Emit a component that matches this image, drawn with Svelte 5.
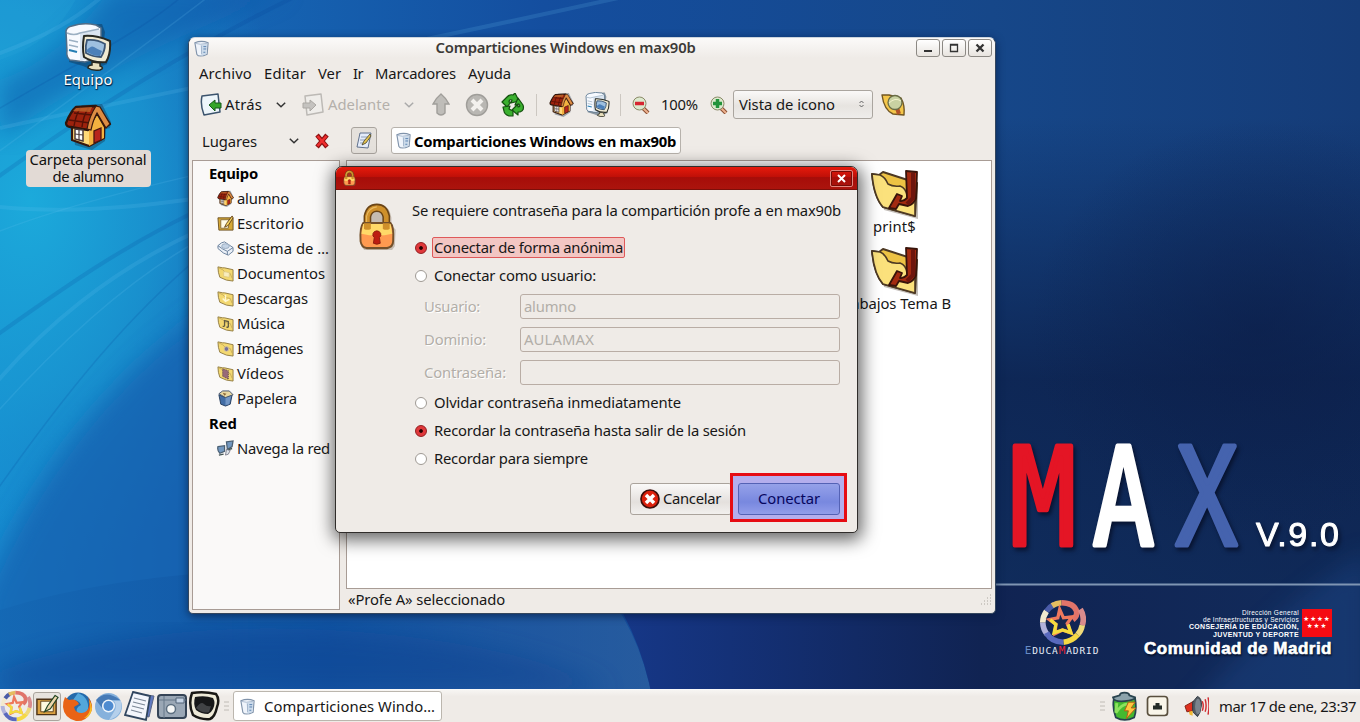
<script>
  // Adjusts tracking so that a label fills its measured width.
  function fit(node, width) {
    const n = node.textContent.length;
    const natural = node.getBoundingClientRect().width;
    node.style.letterSpacing = (width - natural) / n + 'px';
  }
  const menus = [['Archivo', 53], ['Editar', 42], ['Ver', 23], ['Ir', 10], ['Marcadores', 81], ['Ayuda', 43]];
  const places = [
    ['alumno', 52, 'home'], ['Escritorio', 67, 'desk'], ['Sistema de …', 92, 'disk'],
    ['Documentos', 88, 'folder'], ['Descargas', 71, 'down'], ['Música', 48, 'music'],
    ['Imágenes', 66, 'image'], ['Vídeos', 47, 'video'], ['Papelera', 60, 'trash']
  ];
  const fields = [['Usuario:', 56, 'alumno', 52], ['Dominio:', 62, 'AULAMAX', 70], ['Contraseña:', 82, '', 0]];
  const streaks = [
    'M-20 190C90 110 200 40 330 -20', 'M-20 165C70 100 140 50 230 -20', 'M-20 60C40 40 80 20 120 -20',
    'M-20 120C80 60 150 30 200 -20', 'M0 128C150 95 340 60 700 -20', 'M-10 235C100 190 300 150 520 110',
    'M-10 340C60 290 130 240 220 200', 'M-10 420C70 330 150 260 230 225', 'M-10 206C60 214 130 208 200 198',
    'M-10 500C60 400 130 310 220 240', 'M-10 390C40 330 110 270 200 230'
  ];
</script>

{#snippet house(size)}
  <svg width={size} height={size} viewBox="0 0 48 48">
    <path d="M5 24l5-16 6-6 20-1 9 18-1 6-4 1-1 12-13 9-17-5-2-16-4-1z" fill="#102840" opacity=".35" transform="translate(2 1)" />
    <path d="M8 21v17l17 6 15-8V21L31 7z" fill="#ffd978" stroke="#38180d" stroke-width="2.2" stroke-linejoin="round" />
    <path d="M25 23v21l15-8V21L32 10z" fill="#f3b240" />
    <path d="M32 4L12 5Q7 9 2 21q0 4 5 4l17 3q3-8 9-17l8 14 5-3z" fill="#9d220d" stroke="#30150b" stroke-width="2.3" stroke-linejoin="round" />
    <path d="M10 11l18 2M5 18l21 3M17 5q-5 7-7 19M25 5q-6 9-7 20" stroke="#541006" stroke-width="1.4" fill="none" />
    <path d="M12 6l16-1-2 5-17-1z" fill="#c1682c" opacity=".8" />
    <path d="M32 4l4 1 10 17-4 4-9-15q-4 7-6 17l-4-1q2-12 9-23z" fill="#dd8c43" stroke="#38180d" stroke-width="1.2" />
    <path d="M30 41V29l7-3v12z" fill="#b7251c" stroke="#4a1610" stroke-width="1.3" />
    <path d="M11 27l8 1v11l-8-2z" fill="#fff" stroke="#4b3a3a" stroke-width="1.5" /><path d="M15 27v11M11 32l8 1" stroke="#4b3a3a" stroke-width="1.2" />
  </svg>
{/snippet}

{#snippet computer(size)}
  <svg width={size} height={size} viewBox="0 0 48 48">
    <path d="M5 8l9-6 24-1 3 8-1 8 6 4-3 20-15 6-9-4-14-4z" fill="#10304d" opacity=".45" />
    <path d="M2 8q1-4 6-5 12-4 24-1l5 3v29l-16 5L6 37Q2 34 3 28z" fill="#f7faff" stroke="#506d88" stroke-width="1.5" />
    <path d="M16 10q10-3 20-3v26l-20 5z" fill="#dae5f1" />
    <path d="M3 10q7 3 13 0l19-4M5 17l9 2M5 22l9 2" fill="none" stroke="#9cb0c3" stroke-width="1.4" />
    <path d="M5 27l8 2" stroke="#247eb4" stroke-width="2" />
    <path d="M20 13q12-1 26 5 1 13-4 21-13 1-22-5-2-9 0-21z" fill="#f0ead2" stroke="#272923" stroke-width="2" stroke-linejoin="round" />
    <path d="M23 17q10-1 18 4 0 7-4 13-8 0-15-4-1-7 1-13z" fill="#9ec0e0" stroke="#3b5574" stroke-width="1.8" />
    <path d="M22 28q5-6 8-4 3 2 8 4l-2 5q-8 0-14-5z" fill="#4c80b9" />
    <path d="M28 39l8 1v3q5 2 0 4-8 1-12-2 0-3 4-3z" fill="#e8dfbd" stroke="#29291f" stroke-width="1.5" />
  </svg>
{/snippet}

{#snippet server(size)}
  <svg width={size} height={size} viewBox="0 0 18 18">
    <path d="M2 3q7-3 14 0l-1 12q-4 2-7 2-3 0-4-2z" fill="#eff4fb" stroke="#8093aa" stroke-width="1.2" />
    <path d="M8 5l7-1-1 11-5 2z" fill="#cbdaea" /><path d="M2 3.500q5 2 13 0M9 6v9" fill="none" stroke="#9aadc4" stroke-width=".8" /><path d="M11 7h3M11 9.500h3M11 13h2" stroke="#557fae" />
  </svg>
{/snippet}

{#snippet padlock(size)}
  <svg width={size * 0.82} height={size} viewBox="2 -1 45 49" preserveAspectRatio="none">
    <path d="M9 20v-6Q11 2 24 1t15 12v8l5 5-1 17-4 5H8l-4-5V25z" fill="#776550" opacity=".35" transform="translate(2 1)" />
    <path d="M13 24V13Q15 4 24 4t11 9v11" fill="none" stroke="#6b4517" stroke-width="9" />
    <path d="M13 24V13Q15 4 24 4t11 9v11" fill="none" stroke="#cf902b" stroke-width="5.500" />
    <path d="M12 22V13Q14 4 24 3" fill="none" stroke="#e9ba62" stroke-width="1.2" />
    <path d="M8 20h32q4 3 3 19 0 6-7 7H12q-6-1-7-7-1-15 3-19z" fill="#ff9a50" stroke="#74502a" stroke-width="2.2" />
    <path d="M8 21h32l2 10q-18 4-36 0z" fill="#ffd968" />
    <path d="M9 20h8v6q-4 2-8 0zM31 20h8v6q-4 2-8 0z" fill="#cf902b" />
    <path d="M24 28a5 4 0 00-3 7l-1 6q4 2 8 0l-1-6a5 4 0 00-3-7z" fill="#bd1c11" stroke="#8a1b0c" />
  </svg>
{/snippet}

{#snippet share()}
  <svg width="52" height="50" viewBox="0 0 52 50">
    <path d="M9 10l16-4 24 10v34l-34-9z" fill="#c4bfba" />
    <path d="M3 5l7 1 4-3 34 11-2 33-32-9Q5 28 3 5z" fill="#edc244" stroke="#4d3923" stroke-width="2" stroke-linejoin="round" />
    <path d="M3 5l8 1q5 2 8 9 5 3 12 2 6 2 7 10l8 4v16l-32-9Q5 28 3 5z" fill="#fbe17c" stroke="#4d3923" stroke-width="1.6" stroke-linejoin="round" />
    <path d="M37 2l11 1-1 26q-2 6-8 8l-9-2-3 5-7-1 8-14 5 2-2 5q3 1 7-3z" fill="#a32a10" stroke="#38130a" stroke-width="1.8" stroke-linejoin="round" />
    <path d="M44 4v25l-6 6" fill="none" stroke="#6d150d" stroke-width="4" />
  </svg>
{/snippet}

{#snippet placeIcon(kind)}
  {#if kind === 'home'}{@render house(17)}
  {:else if kind === 'desk'}
    <svg width="17" height="17" viewBox="0 0 18 18"><path d="M1 3h16v13H2z" fill="#d6a836" stroke="#705320" /><path d="M4 5h9l-1 9H4z" fill="#fffbe6" stroke="#8c7139" /><path d="M16 1l-6 8-2 4 4-2 5-8z" fill="#f1d15d" stroke="#66451e" /></svg>
  {:else if kind === 'disk'}
    <svg width="17" height="17" viewBox="0 0 18 18"><path d="M1 6q4-4 7-4l9 6v4l-5 4q-5-1-11-7z" fill="#eaf0f7" stroke="#687f9b" /><path d="M1 6q5 4 10 6l6-4M11 12v4" fill="none" stroke="#68809c" /><ellipse cx="9" cy="6.500" rx="4" ry="2.500" fill="#c3d3e5" stroke="#9aacc0" /></svg>
  {:else if kind === 'trash'}
    <svg width="17" height="17" viewBox="0 0 18 18"><path d="M2 5l7 3 7-3-2 10-5 2-5-2z" fill="#426da5" stroke="#263e5e" /><path d="M9 8l6-2-2 9-4 1z" fill="#7296c5" /><path d="M2 4l4-3 7 0 4 4-8 3z" fill="#e9d8a1" stroke="#42526a" /><path d="M6 3l4 1-2 2" fill="#8b6837" /></svg>
  {:else}
    <svg width="17" height="17" viewBox="0 0 18 18">
      <path d="M1 2l5 1h2l9 2v12l-7-1-7-3Q1 8 1 2z" fill="#f3d870" stroke="#927b40" stroke-linejoin="round" /><path d="M2 3l4 2 3 3 5 1 2 5" fill="none" stroke="#c1a458" stroke-width=".8" />
      {#if kind === 'music'}<path d="M8 12V6l4 1v6M6 12h2M10 13h2" fill="none" stroke="#625c41" stroke-width="1.400" />{/if}
      {#if kind === 'image'}<circle cx="10" cy="9.500" r="2.500" fill="#76709a" stroke="#d7c59c" />{/if}
      {#if kind === 'video'}<path d="M6 4l6 2v9l-6-3z" fill="#986a78" stroke="#59424a" stroke-dasharray="1 1" />{/if}
      {#if kind === 'down'}<path d="M9 5v7M6 9l3 3 4-2" fill="none" stroke="#fff7cf" stroke-width="1.500" />{/if}
      {#if kind === 'folder'}<path d="M7 7l6 1v5l-6-1z" fill="#f9edbd" stroke="#d9c580" stroke-width=".7" />{/if}
    </svg>
  {/if}
{/snippet}

{#snippet chevron(color)}
  <svg class="chev" width="10" height="6" viewBox="0 0 10 6"><path d="M.8.8L5 4.7 9.2.8" fill="none" stroke={color} stroke-width="1.5" /></svg>
{/snippet}

{#snippet swirl(size, inner)}
  <svg width={size} height={size} viewBox="0 0 50 50">
    <path d="M9 38A21 21 0 014 25" fill="none" stroke="#b1b2db" stroke-width="6" /><path d="M4 25a21 21 0 014-12" fill="none" stroke="#f2e9cf" stroke-width="6" />
    <path d="M8 13A21 21 0 0116 6" fill="none" stroke="#4b5ca8" stroke-width="6" /><path d="M14 7A21 21 0 0124 4" fill="none" stroke="#e5bd60" stroke-width="6" />
    <path d="M24 4q13 0 16 9 1 5-4 9" fill="none" stroke="#e0746a" stroke-width="6" />
    <path d="M44 11q5 8 2 17" fill="none" stroke="#d98b8c" stroke-width="6" /><path d="M46 28q-1 6-5 10" fill="none" stroke="#efd979" stroke-width="6" /><path d="M41 38Q35 45 26 46" fill="none" stroke="#f5d944" stroke-width="6" />
    <path d="M26 46Q13 46 8 36" fill="none" stroke="#5969bd" stroke-width="6" />
    <path d="M22 11l4 9 9-1-5 7 4 10-9-3-8 4 1-10-7-5 9-2z" fill={inner} stroke="#ed785d" stroke-width="3.500" /><path d="M12 22l6 5-2 9 9-3 9 3-3-9" fill="none" stroke="#f4dc3e" stroke-width="3.500" />
  </svg>
{/snippet}

{#snippet magnifier(plus)}
  <svg width="18" height="18" viewBox="0 0 18 18"><path d="M11 12l5 5" stroke="#8a4f32" stroke-width="4" /><path d="M11 12l5 5" stroke="#edb08e" stroke-width="2" /><circle cx="7.5" cy="7.5" r="6.5" fill="#dce9ce" stroke="#8b8a68" />
    <path d="M3 7.5h9" stroke={plus ? '#23933b' : '#d62631'} stroke-width="3.500" />{#if plus}<path d="M7.5 3v9" stroke="#23933b" stroke-width="3.500" />{/if}</svg>
{/snippet}

<div class="desktop">
  <svg class="wallpaper" width="1360" height="722" viewBox="0 0 1360 722">
    <defs>
      <linearGradient id="base" x1="0" y1="0" x2="1" y2="0"><stop offset="0" stop-color="#168bd0" /><stop offset=".14" stop-color="#1669b7" /><stop offset=".4" stop-color="#144e9f" /><stop offset=".73" stop-color="#164789" /><stop offset="1" stop-color="#153c78" /></linearGradient>
      <radialGradient id="cyan"><stop offset="0" stop-color="#1caadb" /><stop offset=".5" stop-color="#1a9cd4" stop-opacity=".7" /><stop offset="1" stop-color="#178ccf" stop-opacity="0" /></radialGradient>
      <linearGradient id="shade" x1="0" y1="0" x2="0" y2="1"><stop offset=".2" stop-color="#0b1e48" stop-opacity="0" /><stop offset=".65" stop-color="#0c1f49" stop-opacity=".8" /><stop offset="1" stop-color="#0d2048" stop-opacity=".7" /></linearGradient>
      <linearGradient id="low" x1="0" y1="0" x2="1" y2="0"><stop offset="0" stop-color="#1467b3" /><stop offset=".5" stop-color="#11509f" /><stop offset="1" stop-color="#2f62a0" /></linearGradient>
      <linearGradient id="corner" x1="0" y1="0" x2="1" y2="0"><stop offset="0" stop-color="#16388a" /><stop offset=".5" stop-color="#102352" /><stop offset="1" stop-color="#122c5c" /></linearGradient>
      <radialGradient id="navy"><stop offset="0" stop-color="#0b1d47" /><stop offset="1" stop-color="#0b1d47" stop-opacity="0" /></radialGradient>
      <filter id="soft"><feGaussianBlur stdDeviation="12" /></filter>
    </defs>
    <rect width="1360" height="722" fill="url(#base)" />
    <ellipse cx="30" cy="200" rx="260" ry="380" fill="url(#cyan)" />
    <path d="M-20 600Q70 390 240 290V760H-20z" fill="#145fae" opacity=".7" filter="url(#soft)" />
    <path d="M0 140Q90 70 290-10H110Q60 60 0 80z" fill="#0d57a8" opacity=".5" filter="url(#soft)" />
    <path d="M0 60Q60 40 80-10H0z" fill="#2da9da" opacity=".2" />
    <path d="M0 610Q220 540 604 590 646 640 656 722H0z" fill="url(#low)" opacity=".7" />
    <path d="M604 584Q646 640 656 722H1360V584z" fill="url(#corner)" />
    <path d="M0 670Q150 620 330 630T610 690H0z" fill="#0b3f8e" opacity=".45" filter="url(#soft)" />
    <rect x="980" width="380" height="584" fill="url(#shade)" />
    <ellipse cx="1260" cy="330" rx="230" ry="210" fill="url(#navy)" opacity=".6" />
    <path d="M1180 722Q1270 610 1370 550V722z" fill="#1b4a8c" opacity=".4" filter="url(#soft)" />
    {#each streaks as d, i}<path {d} fill="none" stroke={i % 3 ? '#6dc8f1' : '#073f94'} stroke-width={i % 2 ? 1.5 : 4} opacity=".16" />{/each}
    <path d="M996 584.500h364" stroke="#7f95b3" stroke-width="2" />
  </svg>

  <svg class="brand" width="350" height="140" viewBox="0 0 350 140" font-family="DejaVu Sans Mono, monospace" font-size="136" stroke-width="5" stroke-linejoin="round">
    <text x="10" y="116.500" textLength="66" lengthAdjust="spacingAndGlyphs" fill="#e41525" stroke="#e41525">M</text>
    <text x="92.500" y="116.500" textLength="62" lengthAdjust="spacingAndGlyphs" fill="#fff" stroke="#fff">A</text>
    <text x="175.500" y="116.500" textLength="62" lengthAdjust="spacingAndGlyphs" fill="#4563ae" stroke="#4563ae">X</text>
    <text x="256" y="118" textLength="83" font-family="Liberation Sans, sans-serif" font-size="34" fill="#fff" stroke="#fff" stroke-width="1">V.9.0</text>
  </svg>

  <div class="educa">{@render swirl(47, '#17264e')}<div class="educaname"><i>E</i>DUCA<b>M</b>ADRID</div></div>
  <div class="region">
    <div class="regiontop">
      <div class="dept"><span use:fit={57}>Dirección General</span><span use:fit={96}>de Infraestructuras y Servicios</span><strong use:fit={110}>CONSEJERÍA DE EDUCACIÓN,</strong><strong use:fit={86}>JUVENTUD Y DEPORTE</strong></div>
      <div class="flag"><span>★★★★</span><span>★★★</span></div>
    </div>
    <div class="madrid"><span use:fit={188}>Comunidad de Madrid</span></div>
  </div>

  <div class="shortcut pc">{@render computer(48)}<span class="cap light"><span use:fit={49}>Equipo</span></span></div>
  <div class="shortcut personal">{@render house(48)}<span class="cap sel"><span use:fit={117}>Carpeta personal</span><span use:fit={71}>de alumno</span></span></div>

  <div class="window">
    <div class="title">
      {@render server(17)}
      <div class="titletext"><span use:fit={260}>Comparticiones Windows en max90b</span></div>
      <div class="wbtns">
        <span class="wbtn"><svg width="10" height="10"><path d="M1 8h8" stroke="#333" stroke-width="2" /></svg></span>
        <span class="wbtn"><svg width="10" height="10"><path d="M1.5 1.5h7v7h-7zM1 2h8" fill="none" stroke="#333" stroke-width="1.3" /></svg></span>
        <span class="wbtn"><svg width="10" height="10"><path d="M1.5 1.5l7 7M8.500 1.5l-7 7" stroke="#333" stroke-width="2.3" /></svg></span>
      </div>
    </div>
    <div class="menu">{#each menus as [m, w]}<span class="mi"><span use:fit={w}>{m}</span></span>{/each}</div>
    <div class="tools">
      <svg width="23" height="23" viewBox="0 0 23 23"><path d="M2 3l16-2 2 18-16 3Q0 12 2 3z" fill="#edf5fa" stroke="#3b536d" stroke-width="1.5" stroke-linejoin="round" /><path d="M9 12l6-5v3h6v5h-6v3z" fill="#34a528" stroke="#155818" stroke-linejoin="round" /></svg>
      <span class="back"><span use:fit={37}>Atrás</span></span>{@render chevron('#333')}
      <svg class="fwd" width="23" height="23" viewBox="0 0 23 23"><path d="M3 3l16-2 2 18-16 3z" fill="#efedea" stroke="#bcb9b5" stroke-width="1.5" stroke-linejoin="round" /><path d="M14 12L8 7v3H1v5h7v3z" fill="#c4c2bf" stroke="#aaa7a3" stroke-linejoin="round" /></svg>
      <span class="ahead"><span use:fit={62}>Adelante</span></span>{@render chevron('#aaa')}
      <svg class="up" width="18" height="24" viewBox="0 0 18 24"><path d="M9 1q5 4 8 10h-4v9q-4 4-8 0v-9H1Q4 5 9 1z" fill="#bfbdb9" stroke="#a09e9a" stroke-width="1.4" /></svg>
      <svg class="stop" width="24" height="24" viewBox="0 0 24 24"><circle cx="12" cy="12" r="10.500" fill="#b9b7b3" stroke="#9f9d99" stroke-width="1.4" /><path d="M7 7l10 10M17 7L7 17" stroke="#f3f1ee" stroke-width="4" /></svg>
      <svg class="reload" width="24" height="24" viewBox="0 0 24 24" fill="#3bb02f" stroke="#14500f" stroke-width="1.2" stroke-linejoin="round">
        <path d="M1 9l5-5q3-3 6-2l2-2 4 8-8 2 1-3q-3-1-3 2h2l-4 5z" /><path d="M17 5l5 7q2 5-3 7h-2v3l-6-5 6-6v3q3 0 1-3l-4 1z" /><path d="M2 14l7-1-1 3 4 2v5H8q-5-2-5-5z" />
      </svg>
      <i class="sep s1"></i><span class="thome">{@render house(25)}</span><span class="tcomp">{@render computer(25)}</span><i class="sep s2"></i>
      <span class="zoomout">{@render magnifier(false)}</span><span class="pct"><span use:fit={37}>100%</span></span><span class="zoomin">{@render magnifier(true)}</span>
      <div class="combo"><span use:fit={96}>Vista de icono</span><svg width="5" height="8"><path d="M.5 3l2-2 2 2M.5 5l2 2 2-2" fill="none" stroke="#555" stroke-width=".9" /></svg></div>
      <svg class="find" width="25" height="23" viewBox="0 0 25 23"><path d="M1 2h7l12 3q4 7 3 17l-11-1Q3 17 1 2z" fill="#f4c64a" stroke="#725723" stroke-width="1.4" stroke-linejoin="round" /><path d="M16 15l2 6" stroke="#b35327" stroke-width="4" /><circle cx="14" cy="9.500" r="7" fill="#c9d2a2" stroke="#696d47" stroke-width="1.3" /><path d="M8 10q6-6 12-2" stroke="#f3f2cd" fill="none" /></svg>
    </div>
    <div class="location">
      <span class="lug"><span use:fit={55}>Lugares</span></span>{@render chevron('#333')}
      <svg class="redx" width="16" height="16"><path d="M3 2l10 12M13 2L3 14" stroke="#8d1112" stroke-width="4.500" /><path d="M3.500 3l9 10M12.500 3l-9 10" stroke="#f02e2e" stroke-width="2.500" /></svg>
      <span class="edit"><svg width="16" height="18" viewBox="0 0 16 18"><path d="M4 1h11l-3 15-11-1z" fill="#e4ecfa" stroke="#60718d" /><path d="M5 5h7M4 8h6M4 11h5" stroke="#91a0b9" /><path d="M14 2L8 9l-2 4 4-2 5-7z" fill="#e5c34f" stroke="#43402b" stroke-width=".8" /></svg></span>
      <span class="crumb">{@render server(17)}<b use:fit={262}>Comparticiones Windows en max90b</b></span>
    </div>
    <div class="content">
      <div class="side">
        <div class="head"><span use:fit={49}>Equipo</span></div>
        {#each places as [p, w, icon]}<div class="place">{@render placeIcon(icon)}<span use:fit={w}>{p}</span></div>{/each}
        <div class="head"><span use:fit={28}>Red</span></div>
        <div class="place"><svg width="17" height="17" viewBox="0 0 18 18"><path d="M1 7l7-1v6l-5 2q-3-3-2-7zM10 2l7-1-1 6-5 3z" fill="#7398c0" stroke="#4b6073" stroke-width="1.300" /><path d="M10 10l4 1-2 4-3 1z" fill="#dfe5eb" stroke="#667" stroke-width=".8" /><path d="M2 16l5-1M12 10l4-1" stroke="#455" stroke-width="1.500" /></svg><span use:fit={93}>Navega la red</span></div>
      </div>
      <div class="mainpane">
        <div class="canvas">
          <div class="item">{@render share()}<span class="iname"><span use:fit={43}>print$</span></span></div>
          <div class="item">{@render share()}<span class="iname"><span use:fit={113}>Trabajos Tema B</span></span></div>
        </div>
        <div class="status"><span use:fit={157}>«Profe A» seleccionado</span><svg width="12" height="12"><path d="M1 11h11M4 8h8M7 5h5M10 2h2" stroke="#aaa69f" stroke-dasharray="1 2" /></svg></div>
      </div>
    </div>
  </div>

  <div class="dialog">
    <div class="dtitle">{@render padlock(16)}<span class="dclose"><svg width="9" height="9"><path d="M1 1l7 7M8 1L1 8" stroke="#fff" stroke-width="2" /></svg></span></div>
    <div class="dbody">
      <div class="lock">{@render padlock(47)}</div>
      <div class="form">
        <div class="question"><span use:fit={429}>Se requiere contraseña para la compartición profe a en max90b</span></div>
        <div class="radio"><i class="on"></i><span class="focus"><span use:fit={189}>Conectar de forma anónima</span></span></div>
        <div class="radio"><i></i><span class="rl"><span use:fit={162}>Conectar como usuario:</span></span></div>
        <div class="fields">{#each fields as [l, w, v, vw]}<div class="field"><div class="lab"><span use:fit={w}>{l}</span></div><div class="input">{#if v}<span use:fit={vw}>{v}</span>{/if}</div></div>{/each}</div>
        <div class="radio"><i></i><span class="rl"><span use:fit={247}>Olvidar contraseña inmediatamente</span></span></div>
        <div class="radio"><i class="on"></i><span class="rl"><span use:fit={312}>Recordar la contraseña hasta salir de la sesión</span></span></div>
        <div class="radio"><i></i><span class="rl"><span use:fit={154}>Recordar para siempre</span></span></div>
        <div class="actions">
          <span class="btn cancel"><svg width="20" height="20"><circle cx="10" cy="10" r="9" fill="#dc210d" stroke="#3c0e0a" stroke-width="1.7" /><path d="M6 6l8 8M14 6l-8 8" stroke="#fff" stroke-width="3.500" /></svg><span use:fit={58}>Cancelar</span></span>
          <span class="btn connect"><span use:fit={62}>Conectar</span></span>
        </div>
      </div>
    </div>
    <div class="mark"></div>
  </div>

  <div class="taskbar">
    <span class="launch">{@render swirl(32, '#f0ece7')}</span>
    <span class="launch pressed"><svg width="24" height="24" viewBox="0 0 25 24"><path d="M2 5h20v16H2z" fill="#dba242" stroke="#4c3217" stroke-width="1.5" /><path d="M6 7h13v11H6z" fill="#fff9df" stroke="#62431f" /><path d="M21 1l-8 11-3 6 6-3 8-12z" fill="#ecd6ac" stroke="#242" stroke-width="1.2" /></svg></span>
    <svg class="launch" width="31" height="31" viewBox="0 0 31 31"><circle cx="16" cy="15" r="13.500" fill="#246aab" /><path d="M16 2q11 4 10 16-2 6-10 6-4-7 3-10-2-5-8-5z" fill="#53a7dc" /><path d="M3 6l4 3q7-2 10 4l-5 3q1 6 8 6 6-1 7-7 1-5-1-9 7 9 2 17-5 8-14 7Q2 27 1 16q0-6 2-10z" fill="#e96316" /><path d="M27 9q4 12-5 18 6 0 8-9 0-5-3-9z" fill="#f8bf27" /></svg>
    <svg class="launch" width="31" height="31" viewBox="0 0 31 31"><circle cx="15.500" cy="15.500" r="13.500" fill="#86b1dc" /><path d="M3 9q10-11 24 0H16q-6 0-7 8z" fill="#477bb7" /><path d="M28 10q3 14-12 19l6-10q2-5-1-9z" fill="#b5d0eb" /><circle cx="15.500" cy="15" r="6.500" fill="#edf4fb" /><circle cx="15.500" cy="15" r="5" fill="#4e8bd0" /></svg>
    <svg class="launch" width="32" height="32" viewBox="0 0 32 32"><path d="M14 4l16 2-5 21-13-3z" fill="#617ac2" stroke="#5a6685" /><path d="M9 2l17 4-4 24-21-5z" fill="#f3f6fc" stroke="#31465f" stroke-width="1.8" /><path d="M10 8l12 3M9 12l12 3M8 16l12 3M7 20l11 3" stroke="#7b8796" stroke-width="1.2" /></svg>
    <svg class="launch" width="32" height="30" viewBox="0 0 32 30"><rect x="2" y="4" width="28" height="23" rx="3" fill="#9aa7b5" stroke="#354456" stroke-width="2" /><path d="M3 9h27M8 5v22" stroke="#66788a" /><path d="M20 7h8v5h-8z" fill="#c4d2e3" stroke="#526478" /><circle cx="15" cy="18" r="4.500" fill="#f5f6f5" stroke="#5d6f80" stroke-width="1.500" /></svg>
    <svg class="launch" width="32" height="32" viewBox="0 0 32 32"><path d="M4 3q12-2 24 1 4 5 1 13-2 10-7 12-9 1-17-4Q0 14 4 3z" fill="#eeead8" stroke="#191815" stroke-width="2.500" /><path d="M7 7q10-2 18 1 3 5 0 11-2 4-5 5-7 0-12-4Q5 14 7 7z" fill="#171819" /><path d="M8 18q5-7 8-4t7 2l-2 6q-6 2-13-4z" fill="#414345" /></svg>
    <svg class="grip" width="5" height="12"><path d="M0 2h5M0 6h5M0 10h5" stroke="#c0bcb6" /></svg>
    <div class="task">{@render server(17)}<span use:fit={171}>Comparticiones Windo…</span></div>
    <div class="tray">
      <svg width="5" height="12"><path d="M0 2h5M0 6h5M0 10h5" stroke="#c0bcb6" /></svg>
      <svg class="battery" width="26" height="31" viewBox="0 0 27 31"><path d="M2 7q11 5 22 0 2 12-1 20-10 5-19 0Q0 17 2 7z" fill="#44b92f" stroke="#25424f" stroke-width="1.800" /><path d="M1 6l7-2q0-3 5-3t5 3l6 2q0 3-11 4T1 6z" fill="#8ca3ab" stroke="#29434e" stroke-width="1.800" /><path d="M5 12l-1 10q6-9 12-9" fill="none" stroke="#8ce25d" stroke-width="3" /><path d="M17 11h7l-4 6h5L15 28l2-8h-4z" fill="#ffc53d" stroke="#b15b16" /></svg>
      <svg class="net" width="24" height="23" viewBox="0 0 24 23"><rect x="1.500" y="1.500" width="20" height="19" rx="3" fill="#f9f5e9" stroke="#594f3e" stroke-width="1.700" /><path d="M7 14.500v-4h2.500V8h4v2.500H16v4z" fill="#252c28" /></svg>
      <svg class="sound" width="25" height="23" viewBox="0 0 26 23"><path d="M1 11l9-5v10l-7 1z" fill="#df301e" stroke="#832315" /><path d="M9 7l5-6q5 2 4 10t-4 11l-5-5z" fill="#535b63" stroke="#2e3740" /><ellipse cx="14.500" cy="11.500" rx="3" ry="8" fill="#7b848d" /><path d="M19 6q2 5 0 10M22 4q2 7 0 13M25 2q2 9 0 18" fill="none" stroke="#d02e32" stroke-width="1.500" /><path d="M5 17l4-1v5l-3-1z" fill="#f3ba32" /></svg>
      <span use:fit={137}>mar 17 de ene, 23:37</span>
    </div>
  </div>
</div>

<style>
  :global(body) { overflow: hidden; }
  .desktop { position: relative; width: 1360px; height: 722px; overflow: hidden; font: 14.800px/18px "Noto Sans", sans-serif; color: #171717; white-space: nowrap; }
  .desktop :global(*) { box-sizing: border-box; }
  svg { display: block; flex: none; }
  .wallpaper { position: absolute; inset: 0; }
  .brand { position: absolute; left: 1000px; top: 428px; overflow: visible; filter: drop-shadow(2px 3px 2px #07122e); }
  .educa { position: absolute; left: 1023px; top: 599px; width: 78px; display: flex; flex-direction: column; align-items: center; }
  .educaname { font: 9.500px/11px "DejaVu Sans Mono", monospace; color: #e8edf6; letter-spacing: .9px; margin-top: -1px; }
  .educaname i { font-style: normal; font-size: 11px; color: #678bc4; } .educaname b { color: #e42431; font-size: 11px; font-weight: normal; }
  .region { position: absolute; left: 1120px; top: 608px; width: 212px; color: #fff; }
  .regiontop { display: flex; justify-content: flex-end; gap: 3px; height: 32px; }
  .dept { display: flex; flex-direction: column; align-items: flex-end; font: 6.500px/7px "Liberation Sans", sans-serif; padding-top: 1px; }
  .dept strong { font-size: 7px; line-height: 7.500px; }
  .flag { width: 30px; height: 28px; margin-top: 1px; background: #f50b12; font: 6.500px/7px "DejaVu Sans", sans-serif; display: flex; flex-direction: column; align-items: center; justify-content: center; letter-spacing: 1px; }
  .madrid { font: bold 17px/20px "Liberation Sans", sans-serif; text-align: right; -webkit-text-stroke: .6px #fff; text-shadow: 1px 2px 2px #050e25; margin-top: -1px; }
  .shortcut { position: absolute; display: flex; flex-direction: column; align-items: center; width: 126px; }
  .pc { left: 25px; top: 23px; } .personal { left: 25px; top: 102px; }
  .cap { display: flex; flex-direction: column; align-items: center; }
  .light { color: #fff; text-shadow: 1px 1px 1px #00284f, 0 1px 1px #00284f; margin-top: -1px; }
  .sel { background: #e2dad5; border-radius: 4px; width: 125px; height: 37px; line-height: 17px; padding-top: 1px; color: #111; }
  .window { position: absolute; left: 188px; top: 37px; width: 808px; height: 577px; background: #efebe7; border: 1px solid #34465d; border-top-color: #cbd4dd; border-radius: 7px 7px 5px 5px; box-shadow: 0 2px 9px #061a3eb0; display: flex; flex-direction: column; }
  .title { height: 20px; display: flex; align-items: center; padding: 1px 3px 0 4px; background: linear-gradient(#fbfaf9, #efebe7); border-radius: 6px 6px 0 0; }
  .titletext { flex: 1; display: flex; justify-content: center; color: #3c3a37; font-weight: 600; padding-left: 5px; margin-top: -4px; }
  .wbtns { display: flex; gap: 2px; margin-top: -1px; }
  .wbtn { width: 24px; height: 18px; border: 1px solid #8c8984; border-radius: 3px; background: linear-gradient(#fff, #e8e4df); display: flex; align-items: center; justify-content: center; }
  .menu { height: 30px; display: flex; gap: 12px; align-items: center; padding: 0 0 0 10px; }
  .mi { display: flex; }
  .tools { height: 32px; display: flex; align-items: center; padding: 1px 0 0 11px; }
  .back { width: 42px; padding-left: 2px; margin-right: 11px; } .back, .ahead, .pct { position: relative; top: -1px; } .fwd { margin-left: 16px; }
  .ahead { color: #b4b0ab; width: 65px; margin: 0 11px 0 3px; }
  .up { margin-left: 18px; } .stop { margin-left: 15px; } .reload { margin-left: 12px; }
  .sep { width: 1px; height: 22px; background: #ccc7c1; } .s1 { margin-left: 11px; } .s2 { margin-left: 10px; }
  .thome { margin-left: 12px; } .tcomp { margin-left: 11px; } .zoomout { margin-left: 11px; }
  .pct { width: 37px; margin: 0 12px 0 11px; } .zoomin { margin-right: 5px; }
  .combo { width: 140px; height: 29px; border: 1px solid #aaa59f; border-radius: 3px; background: linear-gradient(#faf9f8, #e7e4e0 55%, #efedeb); display: flex; align-items: center; justify-content: space-between; padding: 0 8px 1px 5px; }
  .find { margin-left: 8px; }
  .location { height: 40px; display: flex; align-items: center; padding: 1px 0 0 13px; }
  .lug { width: 87px; } .redx { margin-left: 15px; }
  .edit { width: 26px; height: 27px; margin-left: 21px; border: 1px solid #a9a49e; border-radius: 3px; background: #e5e1dc; display: flex; align-items: center; justify-content: center; }
  .crumb { width: 290px; height: 27px; margin-left: 14px; background: #fff; border: 1px solid #b7b2ac; border-radius: 3px; display: flex; align-items: center; padding-left: 3px; gap: 2px; color: #000; }
  .content { display: flex; padding: 0 3px; gap: 6px; flex: 1; }
  .side { width: 148px; height: 450px; border: 1px solid #a89c95; background: #faf9f8; }
  .head { height: 25px; padding-left: 16px; display: flex; align-items: center; font-weight: bold; color: #000; }
  .head > span, .place > span { margin-top: -1px; }
  .place { height: 25px; padding-left: 24px; display: flex; align-items: center; gap: 3px; }
  .mainpane { flex: 1; }
  .canvas { height: 429px; border: 1px solid #a89c95; background: #fff; padding: 8px 40px 0 0; display: flex; flex-direction: column; align-items: flex-end; }
  .item { width: 113px; height: 77px; display: flex; flex-direction: column; align-items: center; }
  .iname { margin-top: -2px; }
  .status { height: 20px; display: flex; align-items: center; justify-content: space-between; padding: 0 0 0 2px; }
  .dialog { position: absolute; left: 335px; top: 166px; width: 523px; height: 367px; background: #efebe7; border: 1px solid #302d2b; border-radius: 7px 7px 5px 5px; box-shadow: 1px 4px 17px 3px #0009; }
  .dtitle { height: 23px; border-radius: 6px 6px 0 0; background: linear-gradient(#e61a0c, #c01008 44%, #a60d09 48%, #ac140d); border-bottom: 1px solid #7c0f0a; display: flex; align-items: center; justify-content: space-between; padding: 0 4px 0 7px; }
  .dclose { width: 23px; height: 17px; border: 1px solid #e2857d; box-shadow: inset 0 0 0 1px #750b07; border-radius: 2px; display: flex; align-items: center; justify-content: center; }
  .dbody { display: flex; padding-left: 22px; }
  .lock { width: 54px; padding-top: 13px; } .form { width: 430px; }
  .question { height: 24px; margin: 8px 0 12px; display: flex; align-items: center; }
  .radio { height: 28px; display: flex; align-items: center; padding-left: 3px; gap: 7px; }
  .rl { margin-top: -2px; }
  .radio i { width: 12px; height: 12px; border: 1px solid #9f9a94; border-radius: 50%; background: #fff; }
  .radio i.on { background: radial-gradient(#260000 0 20%, #df383b 32%); border-color: #941c1e; }
  .focus { border: 1px solid #df595a; background: #f2c6c3; border-radius: 2px; height: 21px; line-height: 19px; padding: 0 1px; margin: -1px 0 0 -2px; }
  .fields { padding: 4px 0 3px 12px; height: 99px; display: flex; flex-direction: column; gap: 8px; color: #b2aea8; }
  .field { display: flex; height: 25px; align-items: center; flex: none; } .lab { width: 96px; text-shadow: 1px 1px #fff; margin-top: -2px; }
  .input { width: 320px; height: 25px; border: 1px solid #b9ada5; border-radius: 3px; padding: 2px 3px; line-height: 18px; }
  .actions { display: flex; justify-content: flex-end; gap: 6px; padding-right: 2px; margin-top: 10px; }
  .btn { height: 32px; border: 1px solid #aaa39c; border-radius: 3px; background: linear-gradient(#faf9f8, #e4e0dd 60%, #f2f0ee); display: flex; align-items: center; justify-content: center; gap: 3px; }
  .btn > span { margin-top: -2px; }
  .cancel { width: 102px; justify-content: flex-start; padding-left: 9px; } .connect { width: 102px; background: linear-gradient(#95a1e9, #7888df 60%, #929dea); border-color: #5462b5; color: #07065e; position: relative; z-index: 1; }
  .mark { position: absolute; left: 394px; top: 306px; width: 117px; height: 49px; border: 3px solid #e60c13; background: #b4aeed; }
  .taskbar { position: absolute; left: 0; top: 689px; width: 1360px; height: 33px; background: linear-gradient(#f7f5f3, #efebe7 20%); border-top: 1px solid #faf9f8; display: flex; align-items: center; }
  .launch { flex: none; } .pressed { width: 28px; height: 29px; border: 1px solid #aaa59e; border-radius: 3px; background: #e7e3de; display: flex; align-items: center; justify-content: center; margin: 0 1px; }
  .grip { margin: 0 4px; }
  .task { width: 209px; height: 30px; border: 1px solid #bbb6ae; border-radius: 3px; background: #fff; display: flex; align-items: center; gap: 8px; padding-left: 5px; }
  .task > span { margin-top: -1px; }
  .tray { margin-left: auto; display: flex; align-items: center; padding-right: 4px; } .tray > span { margin-top: -1px; } .battery { margin-left: 7px; } .net { margin-left: 8px; } .sound { margin: 0 10px 0 14px; }
</style>
